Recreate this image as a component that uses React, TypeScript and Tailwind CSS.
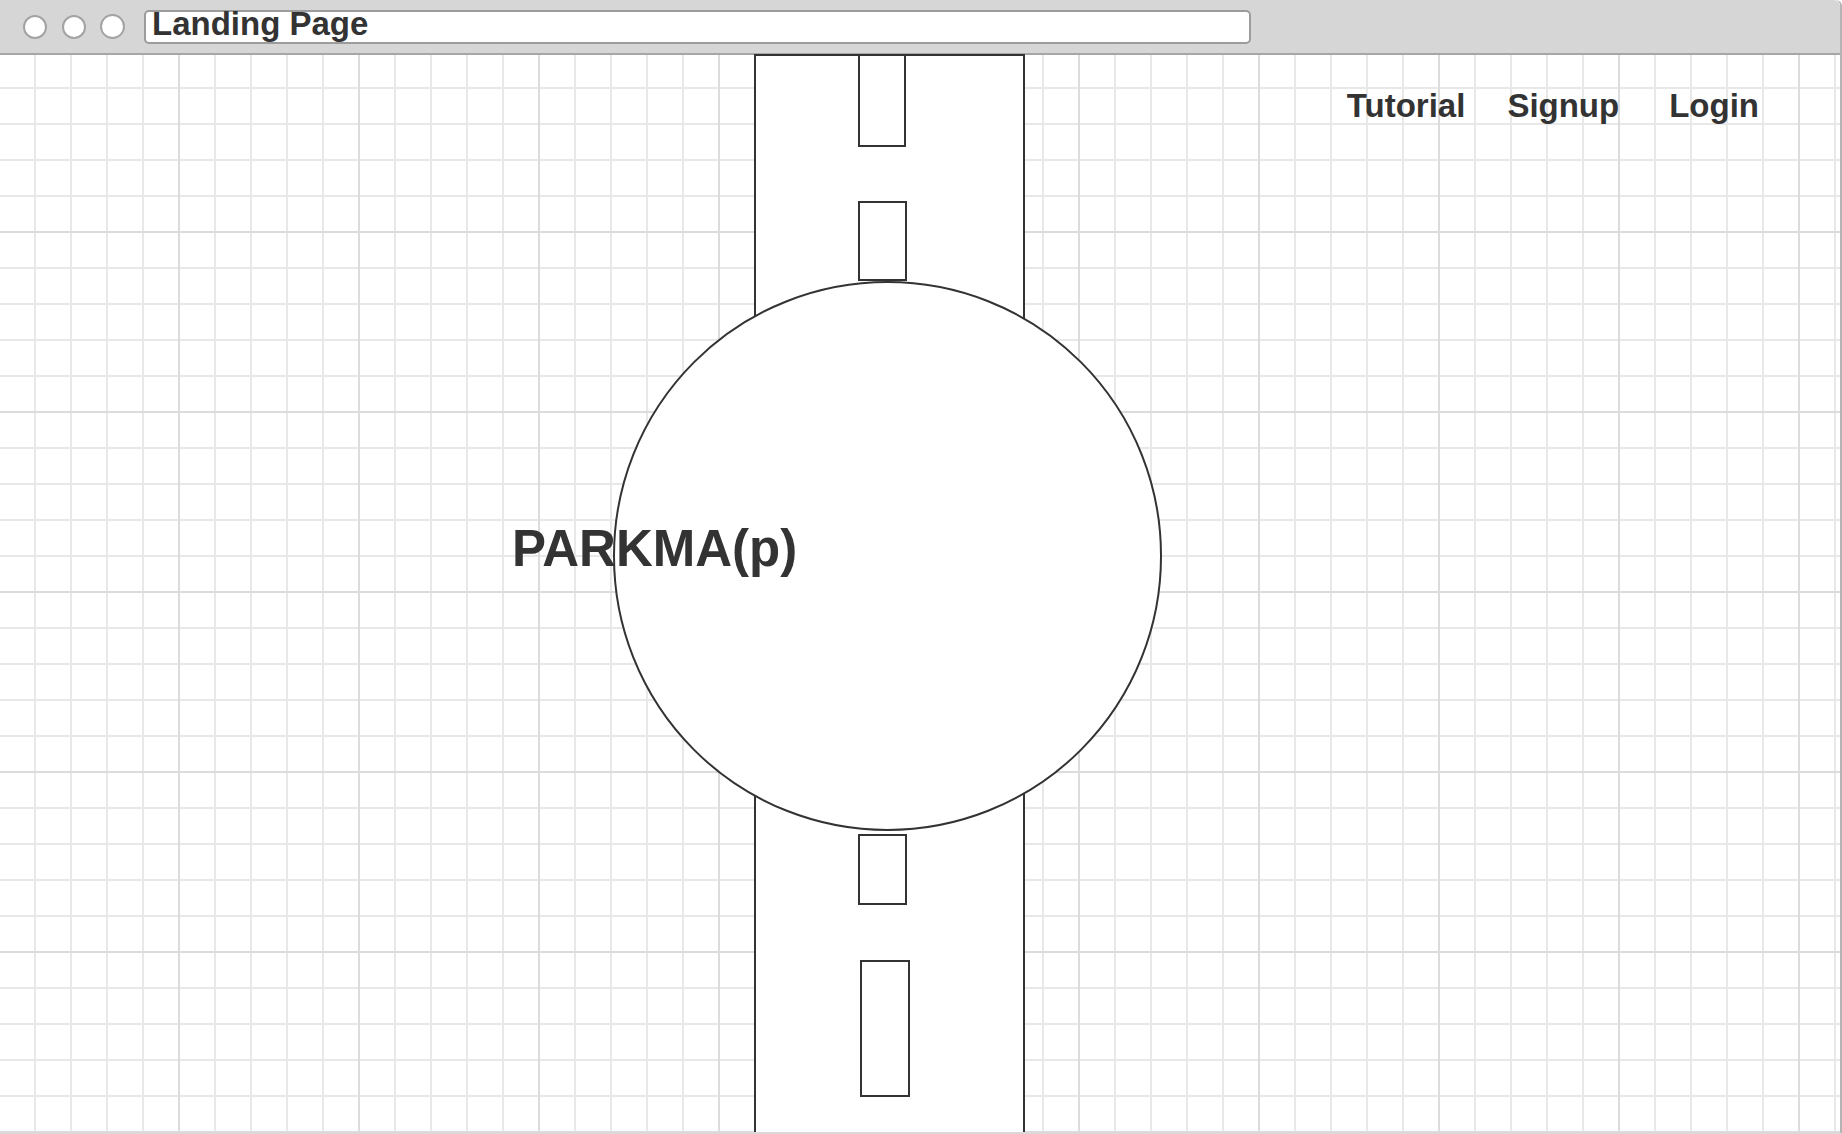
import React from "react";

const font = { fontFamily: '"Liberation Sans", Arial, sans-serif' };

function WindowDots() {
  return (
    <div className="flex items-center gap-[15px] pl-[23px]">
      <div className="w-6 h-6 rounded-full bg-white border-2 border-[#a3a3a3]" />
      <div className="w-6 h-6 rounded-full bg-white border-2 border-[#a3a3a3]" />
      <div className="w-[25px] h-[25px] rounded-full bg-white border-2 border-[#a3a3a3] -ml-px" />
    </div>
  );
}

function Road() {
  // the drawing: a road running top to bottom with dashed centre line
  return (
    <div className="absolute left-[754px] top-[-1px] bottom-0 w-[271px] bg-white border-x-2 border-t-2 border-[#333] flex flex-col">
      <div className="-mt-[2px] ml-[102px] w-[48px] h-[93px] border-2 border-[#333]" />
      <div className="mt-[54px] ml-[102px] w-[49px] h-[80px] border-2 border-[#333]" />
      <div className="mt-[553px] ml-[102px] w-[49px] h-[71px] border-2 border-[#333]" />
      <div className="mt-[55px] ml-[104px] w-[50px] h-[137px] border-2 border-[#333]" />
    </div>
  );
}

export default function App() {
  return (
    <div
      className="h-screen w-full overflow-hidden flex flex-col bg-white border-r-2 border-b-2 border-r-[#b3b3b3] border-b-[#d9d9d9] rounded-tr-[6px]"
      style={font}
    >
      {/* browser chrome */}
      <div className="h-[55px] shrink-0 flex items-center bg-[#d6d6d6] border-b-2 border-[#a6a6a6] rounded-tr-[6px]">
        <WindowDots />
        <div className="ml-[19px] mt-[1px] w-[1107px] h-[34px] flex items-start bg-white border-2 border-[#9c9c9c] rounded-[5px] pl-[6px]">
          <span className="text-[33px] leading-[23px] font-bold text-[#333]">Landing Page</span>
        </div>
      </div>

      {/* grid canvas */}
      <div className="relative flex-1 [background-image:linear-gradient(to_right,transparent_178px,#dcdcdc_178px,#dcdcdc_180px,transparent_180px),linear-gradient(to_bottom,transparent_178px,#dcdcdc_178px,#dcdcdc_180px,transparent_180px),linear-gradient(to_right,transparent_34px,#e8e8e8_34px,#e8e8e8_36px,transparent_36px),linear-gradient(to_bottom,transparent_34px,#e8e8e8_34px,#e8e8e8_36px,transparent_36px)] [background-size:180px_180px,180px_180px,36px_36px,36px_36px] [background-position:0_-2px]">
        <nav className="relative z-20 flex justify-end pt-[34px] pr-[81px] text-[33px] leading-[33px] font-bold text-[#333]">
          <a href="#tutorial">Tutorial</a>
          <a href="#signup" className="ml-[42px]">Signup</a>
          <a href="#login" className="ml-[50px]">Login</a>
        </nav>

        <Road />

        <div className="absolute left-[613px] top-[226px] w-[549px] h-[550px] rounded-full bg-white border-2 border-[#333]" />

        <h1 className="absolute left-[512px] top-[468px] text-[51px] leading-[51px] font-bold text-[#333]">
          PARKMA(p)
        </h1>
      </div>
    </div>
  );
}
